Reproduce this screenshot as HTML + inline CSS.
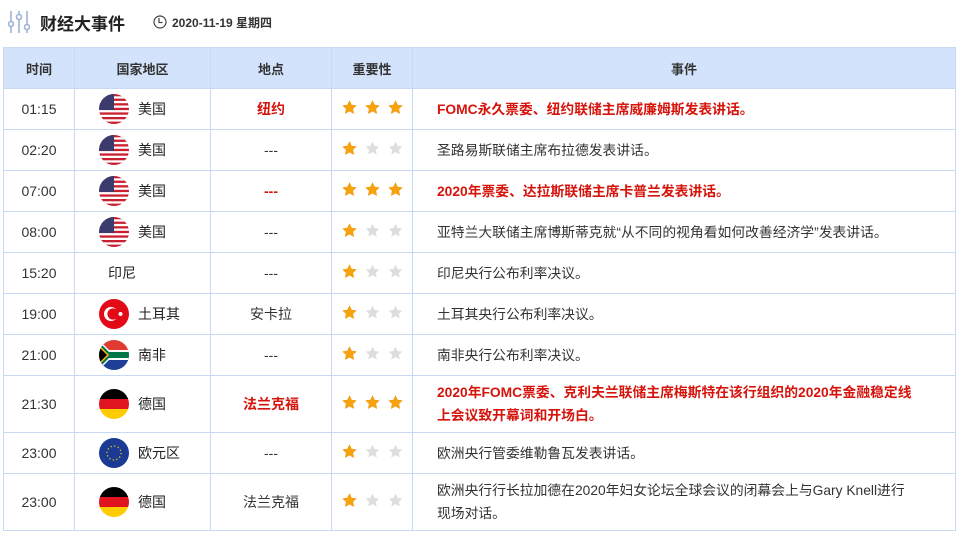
<!DOCTYPE html>
<html><head><meta charset="utf-8"><style>
*{margin:0;padding:0;box-sizing:border-box}
body{width:957px;height:533px;background:#fff;font-family:"Liberation Sans","Noto Sans CJK SC",sans-serif;color:#333;font-size:14px;position:relative;overflow:hidden}
.hd{position:absolute;top:8px;left:8px;height:28px;display:flex;align-items:center}
.ttl{font-size:17px;color:#222;margin-left:10px;font-weight:bold}
.dt{font-size:12px;font-weight:bold;color:#333;margin-left:28px;display:flex;align-items:center}
table{position:absolute;left:3px;top:47px;width:953px;border-collapse:collapse;table-layout:fixed}
td,th{border:1px solid #c8d9f3;text-align:center;vertical-align:middle}
th{background:#d3e3fb;height:41px;font-size:13px;font-weight:bold;color:#333}
td{height:41px}
td.e{text-align:left;padding-left:24px;line-height:23px;padding-right:30px;font-size:13.8px}
.r{color:#d6140c;font-weight:bold}
.c{display:flex;align-items:center;padding-left:24px;font-weight:normal;color:#222}
.c svg{margin-right:9px;flex:none}
.st{display:inline-flex;gap:8px}
</style></head><body>
<div class="hd">
<svg width="22" height="26" viewBox="0 0 22 26" fill="none" stroke="#9db3d8" stroke-width="1.6"><line x1="3" y1="2" x2="3" y2="12"/><circle cx="3" cy="15" r="2.5"/><line x1="3" y1="18" x2="3" y2="24"/><line x1="11" y1="2" x2="11" y2="5"/><circle cx="11" cy="8" r="2.5"/><line x1="11" y1="11" x2="11" y2="24"/><line x1="19" y1="2" x2="19" y2="15"/><circle cx="19" cy="18" r="2.5"/><line x1="19" y1="21" x2="19" y2="24"/></svg>
<span class="ttl">财经大事件</span>
<span class="dt"><svg width="14" height="14" viewBox="0 0 14 14" fill="none" stroke="#444" stroke-width="1.2" style="margin-right:5px"><circle cx="7" cy="7" r="6"/><path d="M6 3v4.5h3.5"/></svg>2020-11-19 星期四</span>
</div>
<svg width="0" height="0" style="position:absolute"><defs>
<symbol id="us" viewBox="0 0 30 30"><clipPath id="cl"><circle cx="15" cy="15" r="15"/></clipPath><g clip-path="url(#cl)"><rect width="30" height="30" fill="#fff"/><g fill="#c8202f"><rect y="0" width="30" height="2.3"/><rect y="4.6" width="30" height="2.3"/><rect y="9.2" width="30" height="2.3"/><rect y="13.8" width="30" height="2.3"/><rect y="18.4" width="30" height="2.3"/><rect y="23" width="30" height="2.3"/><rect y="27.6" width="30" height="2.4"/></g><rect width="15" height="16" fill="#3c3b6e"/></g></symbol>
<symbol id="tr" viewBox="0 0 30 30"><circle cx="15" cy="15" r="15" fill="#e30a17"/><circle cx="12" cy="15" r="7" fill="#fff"/><circle cx="14" cy="15" r="5.6" fill="#e30a17"/><circle cx="21.5" cy="15" r="2" fill="#fff"/></symbol>
<symbol id="za" viewBox="0 0 30 30"><clipPath id="cz"><circle cx="15" cy="15" r="15"/></clipPath><g clip-path="url(#cz)"><rect width="30" height="15" fill="#e03c31"/><rect y="15" width="30" height="15" fill="#1f3f99"/><path d="M0 0L15 15L0 30Z" fill="#fff"/><rect y="10" width="30" height="10" fill="#fff"/><path d="M0 2L13 15L0 28Z" fill="#007749"/><rect y="12" width="30" height="6" fill="#007749"/><path d="M0 5L10 15L0 25Z" fill="#ffb81c"/><path d="M0 7L8 15L0 23Z" fill="#000"/></g></symbol>
<symbol id="de" viewBox="0 0 30 30"><clipPath id="cd"><circle cx="15" cy="15" r="15"/></clipPath><g clip-path="url(#cd)"><rect width="30" height="10" fill="#000"/><rect y="10" width="30" height="10" fill="#e0141e"/><rect y="20" width="30" height="10" fill="#ffcc00"/></g></symbol>
<symbol id="eu" viewBox="0 0 30 30"><circle cx="15" cy="15" r="15" fill="#1a3a94"/><circle cx="15" cy="15" r="7" fill="none" stroke="#ffd200" stroke-width="1.3" stroke-dasharray="1.2 2.46"/></symbol>
<symbol id="s1" viewBox="0 0 16 16"><path d="M8 .8l2.2 4.6 5 .6-3.7 3.4 1 5-4.5-2.5-4.5 2.5 1-5L.8 6l5-.6z" fill="#f7a30b" stroke="#f08c00" stroke-width=".5"/></symbol>
<symbol id="s0" viewBox="0 0 16 16"><path d="M8 .8l2.2 4.6 5 .6-3.7 3.4 1 5-4.5-2.5-4.5 2.5 1-5L.8 6l5-.6z" fill="#ddd"/></symbol>
</defs></svg>
<table>
<colgroup><col style="width:71px"><col style="width:136px"><col style="width:121px"><col style="width:81px"><col></colgroup>
<tr><th>时间</th><th>国家地区</th><th>地点</th><th>重要性</th><th>事件</th></tr>
<tr><td>01:15</td><td><div class="c"><svg width="30" height="30"><use href="#us"/></svg>美国</div></td><td class="r">纽约</td><td><span class="st"><svg width="15" height="15"><use href="#s1"/></svg><svg width="15" height="15"><use href="#s1"/></svg><svg width="15" height="15"><use href="#s1"/></svg></span></td><td class="e r">FOMC永久票委、纽约联储主席威廉姆斯发表讲话。</td></tr>
<tr><td>02:20</td><td><div class="c"><svg width="30" height="30"><use href="#us"/></svg>美国</div></td><td>---</td><td><span class="st"><svg width="15" height="15"><use href="#s1"/></svg><svg width="15" height="15"><use href="#s0"/></svg><svg width="15" height="15"><use href="#s0"/></svg></span></td><td class="e">圣路易斯联储主席布拉德发表讲话。</td></tr>
<tr><td>07:00</td><td><div class="c"><svg width="30" height="30"><use href="#us"/></svg>美国</div></td><td class="r">---</td><td><span class="st"><svg width="15" height="15"><use href="#s1"/></svg><svg width="15" height="15"><use href="#s1"/></svg><svg width="15" height="15"><use href="#s1"/></svg></span></td><td class="e r">2020年票委、达拉斯联储主席卡普兰发表讲话。</td></tr>
<tr><td>08:00</td><td><div class="c"><svg width="30" height="30"><use href="#us"/></svg>美国</div></td><td>---</td><td><span class="st"><svg width="15" height="15"><use href="#s1"/></svg><svg width="15" height="15"><use href="#s0"/></svg><svg width="15" height="15"><use href="#s0"/></svg></span></td><td class="e">亚特兰大联储主席博斯蒂克就“从不同的视角看如何改善经济学”发表讲话。</td></tr>
<tr><td>15:20</td><td><div class="c" style="padding-left:33px">印尼</div></td><td>---</td><td><span class="st"><svg width="15" height="15"><use href="#s1"/></svg><svg width="15" height="15"><use href="#s0"/></svg><svg width="15" height="15"><use href="#s0"/></svg></span></td><td class="e">印尼央行公布利率决议。</td></tr>
<tr><td>19:00</td><td><div class="c"><svg width="30" height="30"><use href="#tr"/></svg>土耳其</div></td><td>安卡拉</td><td><span class="st"><svg width="15" height="15"><use href="#s1"/></svg><svg width="15" height="15"><use href="#s0"/></svg><svg width="15" height="15"><use href="#s0"/></svg></span></td><td class="e">土耳其央行公布利率决议。</td></tr>
<tr><td>21:00</td><td><div class="c"><svg width="30" height="30"><use href="#za"/></svg>南非</div></td><td>---</td><td><span class="st"><svg width="15" height="15"><use href="#s1"/></svg><svg width="15" height="15"><use href="#s0"/></svg><svg width="15" height="15"><use href="#s0"/></svg></span></td><td class="e">南非央行公布利率决议。</td></tr>
<tr><td style="height:57px">21:30</td><td><div class="c"><svg width="30" height="30"><use href="#de"/></svg>德国</div></td><td class="r">法兰克福</td><td><span class="st"><svg width="15" height="15"><use href="#s1"/></svg><svg width="15" height="15"><use href="#s1"/></svg><svg width="15" height="15"><use href="#s1"/></svg></span></td><td class="e r">2020年FOMC票委、克利夫兰联储主席梅斯特在该行组织的2020年金融稳定线<br>上会议致开幕词和开场白。</td></tr>
<tr><td>23:00</td><td><div class="c"><svg width="30" height="30"><use href="#eu"/></svg>欧元区</div></td><td>---</td><td><span class="st"><svg width="15" height="15"><use href="#s1"/></svg><svg width="15" height="15"><use href="#s0"/></svg><svg width="15" height="15"><use href="#s0"/></svg></span></td><td class="e">欧洲央行管委维勒鲁瓦发表讲话。</td></tr>
<tr><td style="height:57px">23:00</td><td><div class="c"><svg width="30" height="30"><use href="#de"/></svg>德国</div></td><td>法兰克福</td><td><span class="st"><svg width="15" height="15"><use href="#s1"/></svg><svg width="15" height="15"><use href="#s0"/></svg><svg width="15" height="15"><use href="#s0"/></svg></span></td><td class="e">欧洲央行行长拉加德在2020年妇女论坛全球会议的闭幕会上与Gary Knell进行<br>现场对话。</td></tr>
</table>
</body></html>
